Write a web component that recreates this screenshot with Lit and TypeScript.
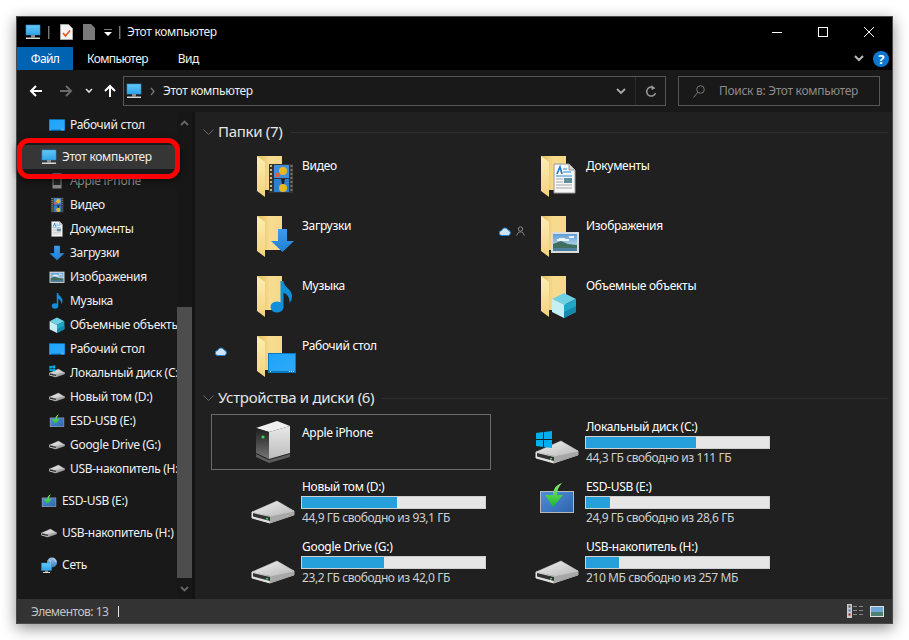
import { LitElement, html, svg, css, nothing } from 'lit';
import { customElement } from 'lit/decorators.js';

// artwork is drawn on a shared 48 box so the big tiles and the small tree icons can reuse it
const art = {
  folder: svg`
    <rect x="6" y="4" width="25" height="34" fill="url(#folderBack)" />
    <polygon points="6,4 14,10 14,45 6,39" fill="url(#folderLeaf)" />`,
  film: svg`
    <rect x="18" y="12" width="24" height="29" fill="#333" />
    ${[13, 17, 21, 25, 29, 33, 37].map(
      (y) => svg`<rect x="19" y=${y} width="2" height="2" fill="#cdb67a" /><rect x="39.500" y=${y} width="2" height="2" fill="#777" />`
    )}
    <rect x="23" y="13" width="15" height="13" fill="#3f8fdc" />
    <rect x="23" y="27" width="15" height="13" fill="#2f7fd0" />
    <circle cx="32" cy="19" r="4" fill="#e8b820" />
    <rect x="24" y="21" width="5" height="4" fill="#e25b4a" />
    <circle cx="32" cy="36" r="4" fill="#e8b820" />
    <path d="M30 27h4l-1 5h-2z" fill="#222" />`,
  arrow: svg`<polygon points="27,17 36,17 36,29 43,29 31.500,40 20,29 27,29" fill="url(#arrowBlue)" />`,
  note: svg`
    <ellipse cx="26" cy="35" rx="6.500" ry="5.500" fill="#0f8fdc" />
    <path d="M29.500 35V9h3c0 6 8.500 8 8.500 15 0 3-1 5-2.500 7 .5-6-3-9.500-6-10V35z" fill="#0f8fdc" />`,
  desktop: svg`
    <rect x="17" y="21" width="28" height="20" fill="#0b78c2" />
    <rect x="18" y="22" width="26" height="17" fill="url(#deskBlue)" />
    <path d="M38 39h1v1h-1zM40 39h1v1h-1zM42 39h1v1h-1zM19 39h1v1h-1z" fill="#fff" />`,
  doc: svg`
    <path d="M19 12h15l6 6v23H19z" fill="#f7f7f7" stroke="#9a9a9a" />
    <path d="M34 12v6h6" fill="#d5d5d5" stroke="#9a9a9a" />
    <path d="M22 22l3-7 2 7" fill="none" stroke="#1c75c8" stroke-width="1.600" />
    <path d="M28 17h4M28 20h8M21 24h16" stroke="#1c8ee0" />
    <path d="M21 27h7M21 30h7M21 33h16M21 36h16" stroke="#a8a8a8" />
    <rect x="29" y="26" width="8" height="5" fill="#5f8f9c" />`,
  picture: svg`
    <rect x="16" y="20" width="28" height="21" fill="#dcdcdc" />
    <rect x="18" y="22" width="24" height="17" fill="url(#sky)" />
    <path d="M24 26h6v1h4v2H22v-2h2zM34 24h5v2h-5z" fill="#eef5f8" />
    <path d="M18 32l8-3 7 3 9 1v6H18z" fill="#3f6f60" />
    <rect x="18" y="36" width="24" height="3" fill="#4d7f9f" />`,
  cube: svg`
    <polygon points="29,21 41,27 29,33 17,27" fill="#6fcfe3" />
    <polygon points="17,27 29,33 29,46 17,40" fill="#c6eef5" />
    <polygon points="29,33 41,27 41,40 29,46" fill="#1fa6c9" />
    <polygon points="29,40 41,34 41,40 29,46" fill="#1788ad" />`,
  server: svg`
    <polygon points="5,36 18,42 39,36 39,39 18,45 5,39" fill="#5c5c5c" />
    <polygon points="26,3 39,8 18,14 5,10" fill="#f0f0f0" />
    <polygon points="18,14 39,8 39,35 18,41" fill="url(#serverSide)" />
    <polygon points="5,10 18,14 18,41 5,35" fill="url(#serverFront)" />
    <circle cx="12" cy="19" r="1.600" fill="#26e34a" />`,
  disk: svg`
    <polygon points="1,34 19,39 19,45 1,40" fill="#e2e2e2" stroke="#e2e2e2" stroke-linejoin="round" />
    <polygon points="19,38 43,33 43,37 19,45" fill="#a8a8a8" stroke="#a8a8a8" stroke-linejoin="round" />
    <polygon points="26,23 43,33 19,38 1,34" fill="url(#diskTop)" stroke="#d0d0d0" stroke-width=".6" stroke-linejoin="round" />
    <polygon points="2,35 19,39 19,43 2,38.500" fill="#333" />
    <rect x="15" y="40" width="2" height="1.500" fill="#35e05a" />`,
  windows: svg`
    <path d="M1 15l7-1v7H1zM9 14l8-1v8H9zM1 22h7v7l-7-1zM9 22h8v8l-8-1z" fill="#00adef" />`,
  usb: svg`
    <rect x="5" y="13" width="34" height="22" fill="#b9b9b9" />
    <rect x="6" y="14" width="32" height="20" fill="url(#usbBlue)" />
    <path d="M27 5c-6 2-9 6-9 12h-8l8 12 10-12h-6c0-5 2-9 5-12z" fill="url(#usbGreen)" />`,
  monitor: svg`
    <rect x="1" y="1" width="14" height="10" fill="url(#screen)" stroke="#2f8fd0" stroke-width=".6" />
    <rect x="6" y="11" width="4" height="2.500" fill="#8d8d8d" />
    <rect x="1" y="13.500" width="14" height="1.500" fill="#d8d8d8" />`,
  phone: svg`
    <rect x="4" y="1" width="8" height="14" fill="#262626" stroke="#8a8a8a" />
    <rect x="4" y="12" width="8" height="3" fill="#8a8a8a" />`,
  network: svg`
    <circle cx="11" cy="5.500" r="5" fill="url(#globe)" />
    <path d="M8 3c2 1 2 2 1 4M12 1c1 2 3 2 3 4" stroke="#d8e8f5" fill="none" stroke-width=".8" />
    <rect x="0.500" y="6" width="10" height="7.500" fill="url(#screen)" stroke="#2f8fd0" stroke-width=".5" />
    <rect x="4" y="13.500" width="3" height="1.500" fill="#8d8d8d" />
    <rect x="2" y="15" width="7" height="1" fill="#d8d8d8" />`,
};

const icon = (content: unknown, viewBox: string, cls = 'i16') =>
  html`<svg class=${cls} viewBox=${viewBox}>${content}</svg>`;

const diskSmall = () => icon(art.disk, '0 12 44 44');

const cloud = html`<svg class="status-cloud" viewBox="0 0 12 9">
  <path d="M3 8.500a2.500 2.500 0 0 1-.4-5 3.500 3.500 0 0 1 6.600-.4A2.800 2.800 0 0 1 9.500 8.500z" fill="#cfe3f5" stroke="#1c7fd0" />
</svg>`;

const person = html`<svg class="status-person" viewBox="0 0 9 10">
  <circle cx="4.500" cy="3" r="2.200" fill="none" stroke="#8a8a8a" />
  <path d="M.8 9.500c.4-2.500 2-3.600 3.700-3.600s3.300 1.100 3.700 3.600" fill="none" stroke="#8a8a8a" />
</svg>`;

interface TreeRow {
  label: string;
  icon: unknown;
  top?: boolean;
  gap?: boolean;
  active?: boolean;
  dim?: boolean;
}

const treeRows: TreeRow[] = [
  { label: 'Рабочий стол', icon: icon(art.desktop, '17 17 28 28') },
  { label: 'Этот компьютер', icon: icon(art.monitor, '0 0 16 16'), top: true, gap: true, active: true },
  { label: 'Apple iPhone', icon: icon(art.phone, '0 0 16 16'), dim: true },
  { label: 'Видео', icon: icon(art.film, '14 11 31 31') },
  { label: 'Документы', icon: icon(art.doc, '14 11 31 31') },
  { label: 'Загрузки', icon: icon(art.arrow, '19 16 25 25') },
  { label: 'Изображения', icon: icon(art.picture, '15 15 30 30') },
  { label: 'Музыка', icon: icon(art.note, '14 9 32 32') },
  { label: 'Объемные объекты', icon: icon(art.cube, '16 20 26 26') },
  { label: 'Рабочий стол', icon: icon(art.desktop, '17 17 28 28') },
  { label: 'Локальный диск (C:)', icon: icon(svg`${art.disk}${art.windows}`, '0 12 44 44') },
  { label: 'Новый том (D:)', icon: diskSmall() },
  { label: 'ESD-USB (E:)', icon: icon(art.usb, '3 2 38 38') },
  { label: 'Google Drive (G:)', icon: diskSmall() },
  { label: 'USB-накопитель (H:)', icon: diskSmall() },
  { label: 'ESD-USB (E:)', icon: icon(art.usb, '3 2 38 38'), top: true, gap: true },
  { label: 'USB-накопитель (H:)', icon: diskSmall(), top: true, gap: true },
  { label: 'Сеть', icon: icon(art.network, '0 0 16 16'), top: true, gap: true },
];

interface Folder {
  label: string;
  overlay: unknown;
  status?: unknown;
}

const folders: Folder[] = [
  { label: 'Видео', overlay: art.film },
  { label: 'Документы', overlay: art.doc },
  { label: 'Загрузки', overlay: art.arrow },
  { label: 'Изображения', overlay: art.picture, status: html`${cloud}${person}` },
  { label: 'Музыка', overlay: art.note },
  { label: 'Объемные объекты', overlay: art.cube },
  { label: 'Рабочий стол', overlay: art.desktop, status: cloud },
];

interface Drive {
  label: string;
  free: string;
  used: number;
  art: unknown;
}

const drives: Drive[] = [
  { label: 'Локальный диск (C:)', free: '44,3 ГБ свободно из 111 ГБ', used: 60, art: svg`${art.disk}${art.windows}` },
  { label: 'Новый том (D:)', free: '44,9 ГБ свободно из 93,1 ГБ', used: 51.8, art: art.disk },
  { label: 'ESD-USB (E:)', free: '24,9 ГБ свободно из 28,6 ГБ', used: 13, art: art.usb },
  { label: 'Google Drive (G:)', free: '23,2 ГБ свободно из 42,0 ГБ', used: 44.8, art: art.disk },
  { label: 'USB-накопитель (H:)', free: '210 МБ свободно из 257 МБ', used: 18.3, art: art.disk },
];

@customElement('app-root')
export class AppRoot extends LitElement {
  static styles = css`
    :host {
      display: block;
      position: relative;
      width: 909px;
      height: 640px;
      padding: 16px;
      box-sizing: border-box;
      background: #fff;
      font-family: 'Noto Sans', sans-serif;
      font-size: 12px;
      letter-spacing: -0.3px;
      color: #fff;
    }

    svg { display: block; flex: none; }
    .defs { position: absolute; width: 0; height: 0; }
    .i16 { width: 16px; height: 16px; }
    .i48 { width: 48px; height: 48px; overflow: visible; }

    .window {
      width: 877px;
      height: 608px;
      box-sizing: border-box;
      display: flex;
      flex-direction: column;
      border: 1px solid #4a4a4a;
      background: #191919;
      box-shadow: 0 4px 14px rgb(0 0 0 / 0.45);
    }

    /* title bar */
    .title {
      height: 30px;
      display: flex;
      align-items: center;
      padding-left: 8px;
      background: #000;
    }
    .title .sep { width: 1px; height: 13px; background: #777; box-shadow: 1px 0 0 #333; }
    .title .s1 { margin: 0 11px 0 7px; }
    .title .s2 { margin: 0 7px 0 7px; }
    .title .gray { margin-left: 10px; }
    .title .drop { margin-left: 9px; }
    .title .name { color: #eee; padding-bottom: 2px; }
    .win-btns { margin-left: auto; display: flex; }
    .win-btn { width: 46px; height: 30px; display: flex; align-items: center; justify-content: center; }

    /* ribbon tabs */
    .tabs {
      height: 23px;
      display: flex;
      align-items: center;
      background: #000;
      letter-spacing: -0.6px;
    }
    .tab { height: 100%; display: flex; align-items: center; padding: 0 15px 0 14px; color: #f2f2f2; }
    .tab.file { width: 56px; box-sizing: border-box; justify-content: center; padding: 0; background: #0063b1; color: #fff; }
    .tab.view { margin-left: 1px; }
    .ribbon-right { margin-left: auto; display: flex; align-items: center; gap: 9px; padding-right: 3px; }
    .help {
      width: 16px;
      height: 16px;
      border-radius: 50%;
      background: #0a78d4;
      color: #fff;
      font-weight: 700;
      font-size: 13px;
      line-height: 16px;
      text-align: center;
    }

    /* navigation */
    .nav {
      height: 42px;
      display: flex;
      align-items: center;
      padding-left: 12px;
      padding-right: 12px;
      background: #191919;
    }
    .nav .fwd { margin-left: 16px; }
    .nav .recent { margin-left: 12px; }
    .nav .up { margin-left: 10px; }
    .address {
      margin-left: 6px;
      width: 543px;
      height: 30px;
      box-sizing: border-box;
      border: 1px solid #555;
      display: flex;
      align-items: center;
      padding-left: 2px;
      color: #eee;
    }
    .address .crumb { margin: 0 8px 0 8px; }
    .address span, .search span { padding-bottom: 2px; }
    .address .tools { margin-left: auto; height: 100%; display: flex; align-items: center; }
    .address .open { margin-right: 9px; }
    .address .refresh { height: 100%; width: 29px; border-left: 1px solid #2c2c2c; display: flex; align-items: center; justify-content: center; }
    .search {
      margin-left: 12px;
      width: 202px;
      height: 30px;
      box-sizing: border-box;
      border: 1px solid #555;
      display: flex;
      align-items: center;
      padding-left: 14px;
      gap: 14px;
      color: #8c8c8c;
    }

    /* body */
    .body { flex: 1; min-height: 0; display: flex; }
    .tree { width: 160px; padding-top: 1px; overflow: hidden; background: #191919; }
    .row {
      height: 24px;
      display: flex;
      align-items: center;
      gap: 5px;
      padding-left: 32px;
      white-space: nowrap;
      color: #f0f0f0;
    }
    .row span { padding-bottom: 2px; }
    .row.top { padding-left: 24px; }
    .row.gap { margin-top: 8px; }
    .row.active { background: #363636; }
    .row.dim { color: #9a9a9a; }

    .scroll {
      width: 15px;
      display: flex;
      flex-direction: column;
      background: #171717;
    }
    .scroll .arrow { height: 21px; display: flex; align-items: center; justify-content: center; }
    .scroll .track { flex: 1; display: flex; flex-direction: column; justify-content: flex-end; }
    .scroll .thumb { height: 271px; background: #4d4d4d; }
    .splitter { width: 3px; background: #141414; }

    .content { flex: 1; background: #202020; padding: 8px 4px 0 8px; min-width: 0; }
    .group { height: 24px; display: flex; align-items: center; color: #e6e6e6; font-size: 15px; }
    .group span { padding-bottom: 2px; }
    .group .chev { margin-right: 4px; }
    .group .line { flex: 1; height: 1px; margin-left: 8px; background: #2e2e2e; }
    .group.second { margin-top: 2px; }
    .tiles {
      margin: 4px 0 0 8px;
      display: grid;
      grid-template-columns: 280px 280px;
      grid-auto-rows: 56px;
      gap: 4px;
    }
    .tile { position: relative; display: flex; border: 1px solid transparent; box-sizing: border-box; margin: 0; }
    .tile.selected { border-color: #6a6a6a; }
    .tile .state { width: 39px; padding: 17px 0 0 3px; box-sizing: border-box; display: flex; gap: 5px; align-items: flex-start; }
    .tile .i48 { margin-top: 3px; }
    .tile .text { margin-left: 3px; padding-top: 8px; white-space: nowrap; }
    .tile.selected .text { padding-top: 9px; }
    .tile.drive .text { padding-top: 3px; flex: 1; min-width: 0; }
    .status-cloud { width: 12px; height: 9px; margin-top: 1px; }
    .status-person { width: 9px; height: 10px; }
    .tile .free { color: #cfcfcf; line-height: 16px; letter-spacing: -0.42px; }
    .tile .label { line-height: 17px; }
    .bar {
      width: 185px;
      height: 13px;
      margin: 1px 0 1px -1px;
      box-sizing: border-box;
      border: 1px solid #cfcfcf;
      background: #e6e6e6;
    }
    .bar .fill { height: 100%; background: #26a0da; }

    .statusbar {
      height: 24px;
      display: flex;
      align-items: center;
      padding: 0 8px 0 14px;
      background: #333;
      color: #c4c4c4;
      letter-spacing: -0.5px;
    }
    .statusbar .tick { width: 1px; height: 11px; margin-left: 10px; background: #e6e6e6; }
    .statusbar .views { margin-left: auto; display: flex; align-items: center; gap: 7px; }

    /* annotation drawn over the screenshot */
    .callout {
      position: absolute;
      left: 17px;
      top: 138px;
      width: 163px;
      height: 41px;
      box-sizing: border-box;
      border: 5px solid #f00;
      border-radius: 12px;
      box-shadow: 0 2px 6px rgb(0 0 0 / 0.55);
    }
  `;

  private renderDefs() {
    const grad = (id: string, stops: string[], x2 = 0, y2 = 1) => svg`
      <linearGradient id=${id} x1="0" y1="0" x2=${x2} y2=${y2}>
        ${stops.map((c, i) => svg`<stop offset=${i / (stops.length - 1)} stop-color=${c} />`)}
      </linearGradient>`;
    return html`<svg class="defs"><defs>
      ${grad('folderBack', ['#e3b95c', '#f7dc90', '#f5d889'], 1, 0)}
      ${grad('folderLeaf', ['#fdeeb4', '#f4d27e'])}
      ${grad('arrowBlue', ['#3c9cec', '#1f7fd4'])}
      ${grad('deskBlue', ['#1ea4fb', '#2fa8f8'], 1, 1)}
      ${grad('sky', ['#5f9fd8', '#d8e8ec'])}
      ${grad('serverSide', ['#e8e8e8', '#bcbcbc'])}
      ${grad('serverFront', ['#1e1e1e', '#767676'])}
      ${grad('diskTop', ['#f2f2f2', '#b8b8b8'], 1, 1)}
      ${grad('usbBlue', ['#4f8fd8', '#2f64ae'], 1, 1)}
      ${grad('usbGreen', ['#8ff06a', '#17b52f'])}
      ${grad('screen', ['#62c8f7', '#2ea4ea'])}
      ${grad('globe', ['#9cc3e6', '#3f7fb8'])}
    </defs></svg>`;
  }

  private renderTitle() {
    return html`<div class="title">
      ${icon(art.monitor, '0 0 16 16')}
      <div class="sep s1"></div>
      <svg width="13" height="16" viewBox="0 0 13 16">
        <path d="M.5.5h8l4 4v11H.5z" fill="#f5f5f5" stroke="#aaa" />
        <path d="M3 9l2.500 3L10 6.500" fill="none" stroke="#e8541e" stroke-width="1.600" />
      </svg>
      <svg class="gray" width="12" height="16" viewBox="0 0 12 16"><path d="M0 0h8l4 4v12H0z" fill="#7a7a7a" /></svg>
      <svg class="drop" width="8" height="7" viewBox="0 0 8 7">
        <path d="M0 0h8" stroke="#fff" /><path d="M0 3h8L4 7z" fill="#fff" />
      </svg>
      <div class="sep s2"></div>
      <span class="name">Этот компьютер</span>
      <div class="win-btns">
        <div class="win-btn"><svg width="10" height="10"><path d="M0 5.500h10" stroke="#fff" /></svg></div>
        <div class="win-btn"><svg width="10" height="10"><rect x=".5" y=".5" width="9" height="9" fill="none" stroke="#fff" /></svg></div>
        <div class="win-btn"><svg width="10" height="10"><path d="M0 0l10 10M10 0L0 10" stroke="#fff" /></svg></div>
      </div>
    </div>`;
  }

  private renderTabs() {
    return html`<div class="tabs">
      <div class="tab file">Файл</div>
      <div class="tab">Компьютер</div>
      <div class="tab view">Вид</div>
      <div class="ribbon-right">
        <svg width="10" height="7" viewBox="0 0 10 7"><path d="M1 1l4 4 4-4" fill="none" stroke="#bbb" stroke-width="2" /></svg>
        <div class="help">?</div>
      </div>
    </div>`;
  }

  private renderNav() {
    return html`<div class="nav">
      <svg width="14" height="14" viewBox="0 0 14 14"><path d="M13 7H2M7 2L2 7l5 5" fill="none" stroke="#fff" stroke-width="2" /></svg>
      <svg class="fwd" width="14" height="14" viewBox="0 0 14 14"><path d="M1 7h11M7 2l5 5-5 5" fill="none" stroke="#6a6a6a" stroke-width="2" /></svg>
      <svg class="recent" width="8" height="6" viewBox="0 0 8 6"><path d="M1 1l3 3 3-3" fill="none" stroke="#ddd" stroke-width="1.600" /></svg>
      <svg class="up" width="14" height="14" viewBox="0 0 14 14"><path d="M7 13V2M2 7l5-5 5 5" fill="none" stroke="#fff" stroke-width="2" /></svg>
      <div class="address">
        ${icon(art.monitor, '0 0 16 16')}
        <svg class="crumb" width="5" height="9" viewBox="0 0 5 9"><path d="M1 1l3 3.500L1 8" fill="none" stroke="#777" stroke-width="1.300" /></svg>
        <span>Этот компьютер</span>
        <div class="tools">
          <svg class="open" width="10" height="7" viewBox="0 0 10 7"><path d="M1 1l4 4 4-4" fill="none" stroke="#aaa" stroke-width="1.800" /></svg>
          <div class="refresh">
            <svg width="12" height="13" viewBox="0 0 12 13">
              <path d="M9.500 3.500A4.500 4.500 0 1 0 10.500 8" fill="none" stroke="#999" stroke-width="1.500" />
              <path d="M6.500 0v5l3.500-1.500z" fill="#999" />
            </svg>
          </div>
        </div>
      </div>
      <div class="search">
        <svg width="12" height="13" viewBox="0 0 12 13">
          <circle cx="7.500" cy="4.500" r="3.800" fill="none" stroke="#777" />
          <path d="M4.800 7.300L.5 12.500" stroke="#777" />
        </svg>
        <span>Поиск в: Этот компьютер</span>
      </div>
    </div>`;
  }

  private renderTree() {
    return html`<div class="tree">
      ${treeRows.map(
        (r) => html`<div class="row ${r.top ? 'top' : ''} ${r.gap ? 'gap' : ''} ${r.active ? 'active' : ''} ${r.dim ? 'dim' : ''}">
          ${r.icon}<span>${r.label}</span>
        </div>`
      )}
    </div>
    <div class="scroll">
      <div class="arrow"><svg width="9" height="6" viewBox="0 0 9 6"><path d="M1 5l3.500-3.500L8 5" fill="none" stroke="#666" stroke-width="1.800" /></svg></div>
      <div class="track"><div class="thumb"></div></div>
      <div class="arrow"><svg width="9" height="6" viewBox="0 0 9 6"><path d="M1 1l3.500 3.500L8 1" fill="none" stroke="#666" stroke-width="1.800" /></svg></div>
    </div>
    <div class="splitter"></div>`;
  }

  private renderGroup(label: string, cls = '') {
    return html`<div class="group ${cls}">
      <svg class="chev" width="11" height="6" viewBox="0 0 11 6"><path d="M.5.5l5 5 5-5" fill="none" stroke="#666" /></svg>
      <span>${label}</span>
      <div class="line"></div>
    </div>`;
  }

  private renderContent() {
    return html`<div class="content">
      ${this.renderGroup('Папки (7)')}
      <div class="tiles">
        ${folders.map(
          (f) => html`<div class="tile">
            <div class="state">${f.status ?? nothing}</div>
            ${icon(svg`${art.folder}${f.overlay}`, '0 0 48 48', 'i48')}
            <div class="text"><div class="label">${f.label}</div></div>
          </div>`
        )}
      </div>
      ${this.renderGroup('Устройства и диски (6)', 'second')}
      <div class="tiles">
        <div class="tile selected">
          <div class="state"></div>
          ${icon(art.server, '0 0 48 48', 'i48')}
          <div class="text"><div class="label">Apple iPhone</div></div>
        </div>
        ${drives.map(
          (d) => html`<div class="tile drive">
            <div class="state"></div>
            ${icon(d.art, '0 0 48 48', 'i48')}
            <div class="text">
              <div class="label">${d.label}</div>
              <div class="bar"><div class="fill" style="width:${d.used}%"></div></div>
              <div class="free">${d.free}</div>
            </div>
          </div>`
        )}
      </div>
    </div>`;
  }

  private renderStatus() {
    return html`<div class="statusbar">
      <span>Элементов: 13</span>
      <div class="tick"></div>
      <div class="views">
        <svg width="16" height="14" viewBox="0 0 16 14">
          <rect x="0" y="0" width="5" height="14" fill="#c8c8c8" />
          <rect x="1.500" y="1.500" width="2" height="2" fill="#555" />
          <rect x="1.500" y="5.500" width="2" height="2" fill="#4a7fc0" />
          <rect x="1.500" y="9.500" width="2" height="2" fill="#a02020" />
          <path d="M6 2.500h4M12 2.500h4M6 6.500h4M12 6.500h4M6 10.500h4M12 10.500h4" stroke="#888" />
        </svg>
        <svg width="14" height="11" viewBox="0 0 14 11">
          <rect width="14" height="11" fill="#e0e0e0" />
          <rect x="1" y="1" width="12" height="9" fill="#6fa8d8" />
          <rect x="1" y="6" width="12" height="4" fill="#4f7f70" />
        </svg>
      </div>
    </div>`;
  }

  render() {
    return html`${this.renderDefs()}
      <div class="window">
        ${this.renderTitle()} ${this.renderTabs()} ${this.renderNav()}
        <div class="body">${this.renderTree()} ${this.renderContent()}</div>
        ${this.renderStatus()}
      </div>
      <div class="callout"></div>`;
  }
}
